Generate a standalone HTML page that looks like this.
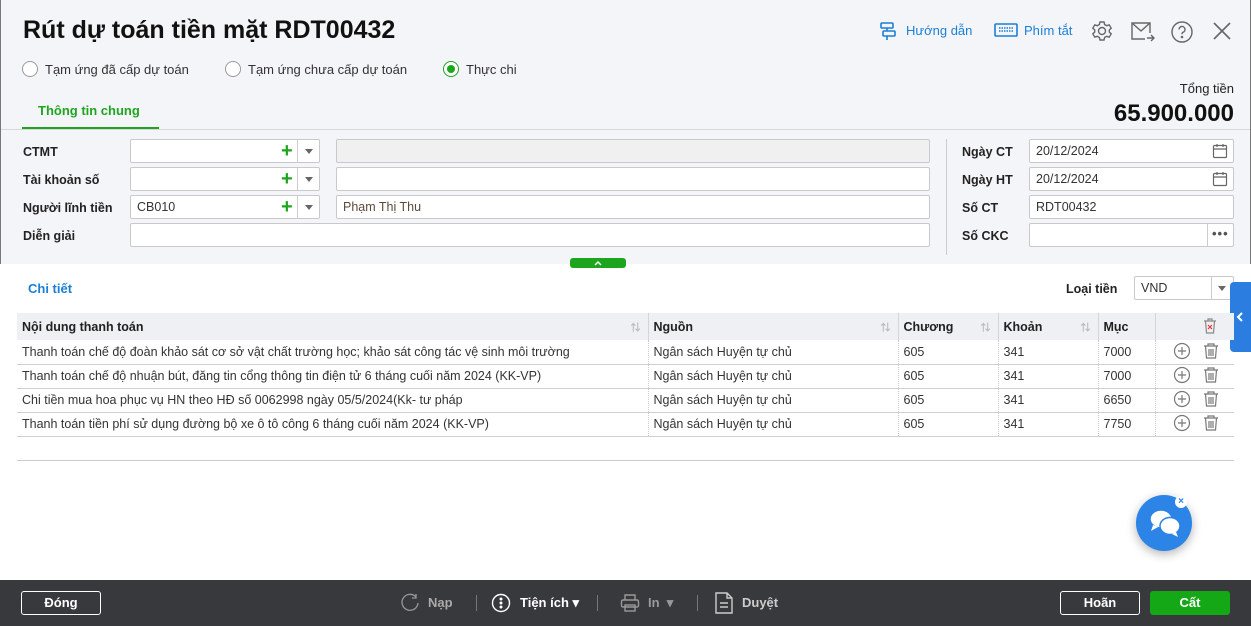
<!DOCTYPE html>
<html><head><meta charset="utf-8">
<style>
*{box-sizing:border-box;margin:0;padding:0}
body{width:1251px;height:626px;overflow:hidden;font-family:"Liberation Sans","Noto Sans CJK SC",sans-serif;font-size:13px;color:#212121;background:#fff;position:relative}
.top{position:absolute;left:0;top:0;width:1251px;height:264px;background:#f4f5f8;border-left:1px solid #777;border-right:1px solid #777}
.abs{position:absolute}
h1{position:absolute;left:23px;top:16px;font-size:25px;font-weight:bold;color:#111}
.radio{position:absolute;top:61px;display:flex;align-items:center;font-size:13px;color:#333}
.radio i{width:16px;height:16px;border:1px solid #999;border-radius:50%;background:#fff;margin-right:7px;display:inline-block;position:relative}
.radio i.on{border-color:#1ea51e}
.radio i.on:after{content:"";position:absolute;left:3px;top:3px;width:8px;height:8px;border-radius:50%;background:#1ea51e}
.lbl{position:absolute;font-weight:bold;font-size:12.5px;color:#222}
.inp{position:absolute;height:24px;background:#fff;border:1px solid #c9c9c9;border-radius:2px;font-size:12.5px;padding:4px 6px;color:#333}
.plus{position:absolute;color:#1ea51e;font-size:20px;font-weight:bold;line-height:20px}
.dd{position:absolute;width:0;height:0;border-left:4px solid transparent;border-right:4px solid transparent;border-top:5px solid #666}
table{position:absolute;left:17px;top:313px;width:1217px;border-collapse:collapse;font-size:12.5px}
th{background:#eef0f4;text-align:left;font-weight:bold;height:27px;padding:0 5px;border-right:1px solid #d5d5d5;position:relative}
td{height:24px;padding:0 5px;border-bottom:1px solid #d0d0d0;border-right:1px dotted #ccc;color:#333}
.sort{position:absolute;right:7px;top:6px;color:#bbb;font-size:10px}
.foot{position:absolute;left:0;top:580px;width:1251px;height:46px;background:#38393d}
.btn{position:absolute;top:591px;height:24px;border:1px solid #fff;border-radius:3px;color:#fff;font-weight:bold;text-align:center;line-height:22px;font-size:13px}
.ft{position:absolute;top:595px;color:#ddd;font-weight:bold;font-size:13px}
</style></head><body>
<div class="top"></div>
<h1>Rút dự toán tiền mặt RDT00432</h1>
<div class="radio" style="left:22px"><i></i>Tạm ứng đã cấp dự toán</div>
<div class="radio" style="left:225px"><i></i>Tạm ứng chưa cấp dự toán</div>
<div class="radio" style="left:443px"><i class="on"></i>Thực chi</div>
<div class="abs" style="left:38px;top:103px;font-weight:bold;color:#1ea51e">Thông tin chung</div>
<div class="abs" style="left:22px;top:127px;width:137px;height:3px;background:#1ea51e"></div>
<div class="abs" style="left:1px;top:129px;width:1249px;height:1px;background:#d8d8d8"></div>
<svg class="abs" style="left:878px;top:21px" width="20" height="20" viewBox="0 0 20 20" fill="none" stroke="#1a7fd6" stroke-width="1.6"><rect x="3" y="2" width="12" height="5" rx="1"/><rect x="5" y="10" width="12" height="5" rx="1"/><path d="M9 7v3M9 15v4"/></svg>
<div class="abs" style="left:906px;top:23px;color:#1a7fd6;font-size:13px">Hướng dẫn</div>
<svg class="abs" style="left:994px;top:23px" width="24" height="14" viewBox="0 0 24 14" fill="none" stroke="#1a7fd6" stroke-width="1.6"><rect x="1" y="1" width="22" height="12" rx="1"/><path d="M5 5h14M5 8h14" stroke-dasharray="1.5 1"/></svg>
<div class="abs" style="left:1024px;top:23px;color:#1a7fd6;font-size:13px">Phím tắt</div>
<svg class="abs" style="left:1091px;top:20px" width="22" height="22" viewBox="0 0 22 22" fill="none" stroke="#666" stroke-width="1.4"><circle cx="11" cy="11" r="3.5"/><path d="M9 2h4l.6 2.5 2.2 1.2 2.4-.9 2 3.4-1.9 1.7v2.2l1.9 1.7-2 3.4-2.4-.9-2.2 1.2L13 20H9l-.6-2.5-2.2-1.2-2.4.9-2-3.4 1.9-1.7V9.9L1.8 8.2l2-3.4 2.4.9 2.2-1.2z"/></svg>
<svg class="abs" style="left:1130px;top:21px" width="26" height="22" viewBox="0 0 26 22" fill="none" stroke="#666" stroke-width="1.4"><path d="M20 12V2H2v16h13"/><path d="M2 2l9 8 9-8"/><path d="M17 17h7M21 14l3 3-3 3"/></svg>
<svg class="abs" style="left:1170px;top:20px" width="24" height="24" viewBox="0 0 24 24" fill="none" stroke="#666" stroke-width="1.4"><circle cx="12" cy="12" r="10"/><path d="M9 9.5a3 3 0 1 1 4 2.8c-.8.4-1 1-1 2"/><circle cx="12" cy="17" r=".6" fill="#666"/></svg>
<svg class="abs" style="left:1212px;top:21px" width="20" height="20" viewBox="0 0 20 20" stroke="#666" stroke-width="1.6"><path d="M2 2l16 16M18 2L2 18"/></svg>
<div class="abs" style="right:17px;top:81px;font-size:13px;color:#222">Tổng tiền</div>
<div class="abs" style="right:17px;top:100px;font-size:24px;font-weight:bold;color:#111">65.900.000</div>
<div class="lbl" style="left:23px;top:145px">CTMT</div>
<div class="lbl" style="left:23px;top:173px">Tài khoản số</div>
<div class="lbl" style="left:23px;top:201px">Người lĩnh tiền</div>
<div class="lbl" style="left:23px;top:229px">Diễn giải</div>
<div class="inp" style="left:130px;top:139px;width:190px"></div>
<div class="inp" style="left:130px;top:167px;width:190px"></div>
<div class="inp" style="left:130px;top:195px;width:190px">CB010</div>
<div class="abs" style="left:297px;top:140px;width:1px;height:22px;background:#ccc"></div>
<div class="abs" style="left:297px;top:168px;width:1px;height:22px;background:#ccc"></div>
<div class="abs" style="left:297px;top:196px;width:1px;height:22px;background:#ccc"></div>
<div class="plus" style="left:281px;top:141px">+</div>
<div class="plus" style="left:281px;top:169px">+</div>
<div class="plus" style="left:281px;top:197px">+</div>
<div class="dd" style="left:305px;top:149px"></div>
<div class="dd" style="left:305px;top:177px"></div>
<div class="dd" style="left:305px;top:205px"></div>
<div class="inp" style="left:336px;top:139px;width:594px;background:#f0f0f0"></div>
<div class="inp" style="left:336px;top:167px;width:594px"></div>
<div class="inp" style="left:336px;top:195px;width:594px;color:#5a4a3a">Phạm Thị Thu</div>
<div class="inp" style="left:130px;top:223px;width:800px"></div>
<div class="abs" style="left:946px;top:139px;width:1px;height:116px;background:#ccc"></div>
<div class="lbl" style="left:962px;top:145px">Ngày CT</div>
<div class="lbl" style="left:962px;top:173px">Ngày HT</div>
<div class="lbl" style="left:962px;top:201px">Số CT</div>
<div class="lbl" style="left:962px;top:229px">Số CKC</div>
<div class="inp" style="left:1029px;top:139px;width:205px">20/12/2024</div>
<div class="inp" style="left:1029px;top:167px;width:205px">20/12/2024</div>
<div class="inp" style="left:1029px;top:195px;width:205px">RDT00432</div>
<div class="inp" style="left:1029px;top:223px;width:205px"></div>
<div class="abs" style="left:1207px;top:224px;width:1px;height:22px;background:#ccc"></div>
<div class="abs" style="left:1212px;top:226px;color:#555;font-weight:bold;letter-spacing:1px">•••</div>
<svg class="abs" style="left:1212px;top:143px" width="16" height="16" viewBox="0 0 16 16" fill="none" stroke="#666" stroke-width="1.2"><rect x="1.5" y="2.5" width="13" height="12" rx="1"/><path d="M1.5 6h13M5 1v3M11 1v3"/></svg>
<svg class="abs" style="left:1212px;top:171px" width="16" height="16" viewBox="0 0 16 16" fill="none" stroke="#666" stroke-width="1.2"><rect x="1.5" y="2.5" width="13" height="12" rx="1"/><path d="M1.5 6h13M5 1v3M11 1v3"/></svg>
<div class="abs" style="left:570px;top:258px;width:56px;height:10px;background:#1ea51e;border-radius:3px"></div>
<svg class="abs" style="left:593px;top:259px" width="10" height="8" viewBox="0 0 10 8" fill="none" stroke="#fff" stroke-width="1.5"><path d="M2 6l3-3 3 3"/></svg>
<div class="abs" style="left:28px;top:281px;color:#1a7fd6;font-weight:bold">Chi tiết</div>
<div class="lbl" style="left:1066px;top:282px">Loại tiền</div>
<div class="inp" style="left:1134px;top:276px;width:100px;height:24px">VND</div>
<div class="abs" style="left:1211px;top:277px;width:1px;height:22px;background:#ccc"></div>
<div class="dd" style="left:1218px;top:286px"></div>
<div class="abs" style="left:1230px;top:282px;width:21px;height:70px;background:#2b7de0;border-radius:4px 0 0 4px"></div>
<svg class="abs" style="left:1235px;top:311px" width="10" height="12" viewBox="0 0 10 12" fill="none" stroke="#fff" stroke-width="2"><path d="M7 2L3 6l4 4"/></svg>
<table>
<tr><th style="width:631px">Nội dung thanh toán<span class="sort">⇅</span></th><th style="width:250px">Nguồn<span class="sort">⇅</span></th><th style="width:100px">Chương<span class="sort">⇅</span></th><th style="width:100px">Khoản<span class="sort">⇅</span></th><th style="width:57px">Mục</th><th style="border-right:none"></th></tr>
<tr><td>Thanh toán chế độ đoàn khảo sát cơ sở vật chất trường học; khảo sát công tác vệ sinh môi trường</td><td>Ngân sách Huyện tự chủ</td><td>605</td><td>341</td><td>7000</td><td style="border-right:none"></td></tr>
<tr><td>Thanh toán chế độ nhuận bút, đăng tin cổng thông tin điện tử 6 tháng cuối năm 2024 (KK-VP)</td><td>Ngân sách Huyện tự chủ</td><td>605</td><td>341</td><td>7000</td><td style="border-right:none"></td></tr>
<tr><td>Chi tiền mua hoa phục vụ HN theo HĐ số 0062998 ngày 05/5/2024(Kk- tư pháp</td><td>Ngân sách Huyện tự chủ</td><td>605</td><td>341</td><td>6650</td><td style="border-right:none"></td></tr>
<tr><td>Thanh toán tiền phí sử dụng đường bộ xe ô tô công 6 tháng cuối năm 2024 (KK-VP)</td><td>Ngân sách Huyện tự chủ</td><td>605</td><td>341</td><td>7750</td><td style="border-right:none"></td></tr>
</table>
<div class="abs" style="left:17px;top:460px;width:1217px;height:1px;background:#ccc"></div>
<svg class="abs" style="left:1201px;top:317px" width="18" height="18" viewBox="0 0 18 18" fill="none" stroke="#888" stroke-width="1.2"><path d="M3 4h12M7 4V2h4v2M4.5 4l1 12h7l1-12"/><path d="M7 8l4 4M11 8l-4 4" stroke="#e33"/></svg>
<svg class="abs" style="left:1172px;top:342px" width="50" height="96" viewBox="0 0 50 96" fill="none" stroke="#777" stroke-width="1.2">
<g id="r"><circle cx="10" cy="9" r="7.5"/><path d="M10 5v8M6 9h8"/><path d="M32 4h14M36 4V2h6v2M33.5 4l1 12h9l1-12M37 7v7M39 7v7M41 7v7"/></g>
<use href="#r" y="24"/><use href="#r" y="48"/><use href="#r" y="72"/></svg>
<div class="abs" style="left:1136px;top:495px;width:56px;height:56px;border-radius:50%;background:#2b84e6;box-shadow:0 3px 10px rgba(0,0,0,.3)"></div>
<svg class="abs" style="left:1148px;top:508px" width="34" height="30" viewBox="0 0 34 30" fill="#fff" stroke="#2b84e6" stroke-width="1.5"><ellipse cx="13" cy="11" rx="11" ry="9"/><path d="M5 17l-2 6 7-4z" stroke="none"/><ellipse cx="22" cy="18" rx="10" ry="8.5"/><path d="M28 24l2 5-6-3z" stroke="none"/></svg>
<div class="abs" style="left:1175px;top:496px;width:12px;height:12px;border-radius:50%;background:#fff;color:#2b84e6;font-size:10px;text-align:center;line-height:12px;font-weight:bold">×</div>
<div class="foot"></div>
<div class="btn" style="left:21px;width:80px">Đóng</div>
<svg class="abs" style="left:400px;top:593px" width="20" height="20" viewBox="0 0 20 20" fill="none" stroke="#999" stroke-width="1.3"><path d="M16 4a8 8 0 1 0 2 6"/><path d="M16 1v4h-4"/></svg>
<div class="ft" style="left:428px;color:#aaa">Nạp</div>
<div class="abs" style="left:476px;top:595px;width:1px;height:16px;background:#777"></div>
<svg class="abs" style="left:491px;top:593px" width="20" height="20" viewBox="0 0 20 20" fill="none" stroke="#fff" stroke-width="1.4"><circle cx="10" cy="10" r="8.5"/><circle cx="10" cy="6" r=".8" fill="#fff"/><circle cx="10" cy="10" r=".8" fill="#fff"/><circle cx="10" cy="14" r=".8" fill="#fff"/></svg>
<div class="ft" style="left:520px;color:#fff">Tiện ích ▾</div>
<div class="abs" style="left:597px;top:595px;width:1px;height:16px;background:#777"></div>
<svg class="abs" style="left:620px;top:593px" width="20" height="20" viewBox="0 0 20 20" fill="none" stroke="#999" stroke-width="1.4"><path d="M5 7V2h10v5"/><rect x="1.5" y="7" width="17" height="7" rx="1.5"/><rect x="5" y="12" width="10" height="6"/></svg>
<div class="ft" style="left:648px;color:#999">In &nbsp;▾</div>
<div class="abs" style="left:697px;top:595px;width:1px;height:16px;background:#777"></div>
<svg class="abs" style="left:714px;top:592px" width="20" height="22" viewBox="0 0 20 22" fill="none" stroke="#ccc" stroke-width="1.4"><path d="M2 1h11l5 5v15H2z M13 1v5h5M6 11h8M6 15h8"/></svg>
<div class="ft" style="left:742px;color:#ccc">Duyệt</div>
<div class="btn" style="left:1060px;width:80px">Hoãn</div>
<div class="btn" style="left:1150px;width:80px;background:#14a817;border-color:#14a817">Cất</div>
</body></html>
